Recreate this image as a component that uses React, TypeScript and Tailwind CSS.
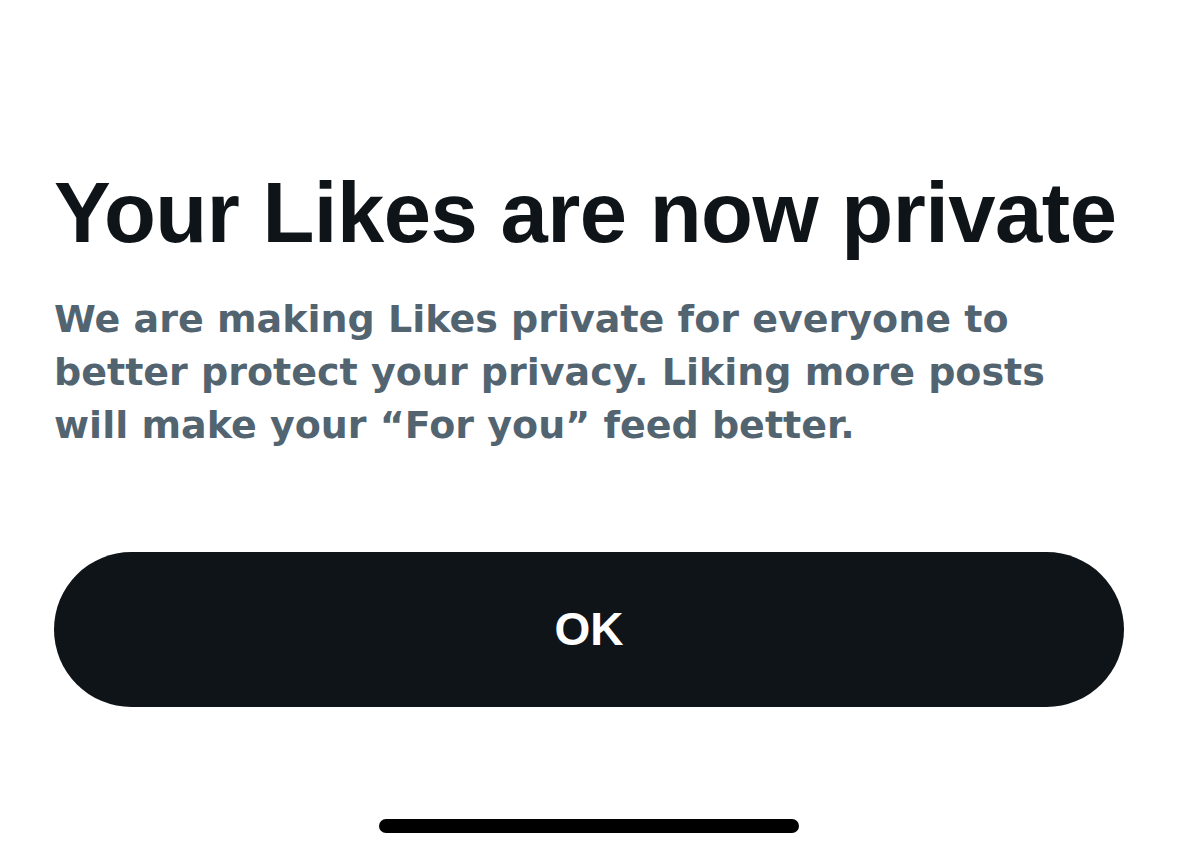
export default function App() {
  return (
    <div className="flex h-[857px] w-full flex-col bg-white px-[54px] pt-[163px]">
      <h1 className="font-['Liberation_Sans',Arial,sans-serif] text-[85px] font-bold leading-[100px] tracking-[-0.5px] whitespace-nowrap text-[#0f1419]">
        Your Likes are now private
      </h1>
      <p className="mt-[30px] font-['DejaVu_Sans',sans-serif] text-[38px] font-bold leading-[53px] tracking-[0px] text-[#536471]">
        We are making Likes private for everyone to
        <br />
        better protect your privacy. Liking more posts
        <br />
        will make your “For you” feed better.
      </p>
      <button
        type="button"
        className="mt-[100px] flex h-[155px] w-full items-center justify-center rounded-full bg-[#0f1419] font-['Liberation_Sans',Arial,sans-serif] text-[46px] font-bold text-white"
      >
        OK
      </button>
      <div className="mt-auto mb-[24px] flex justify-center">
        <div className="h-[14px] w-[420px] rounded-full bg-black" />
      </div>
    </div>
  );
}
